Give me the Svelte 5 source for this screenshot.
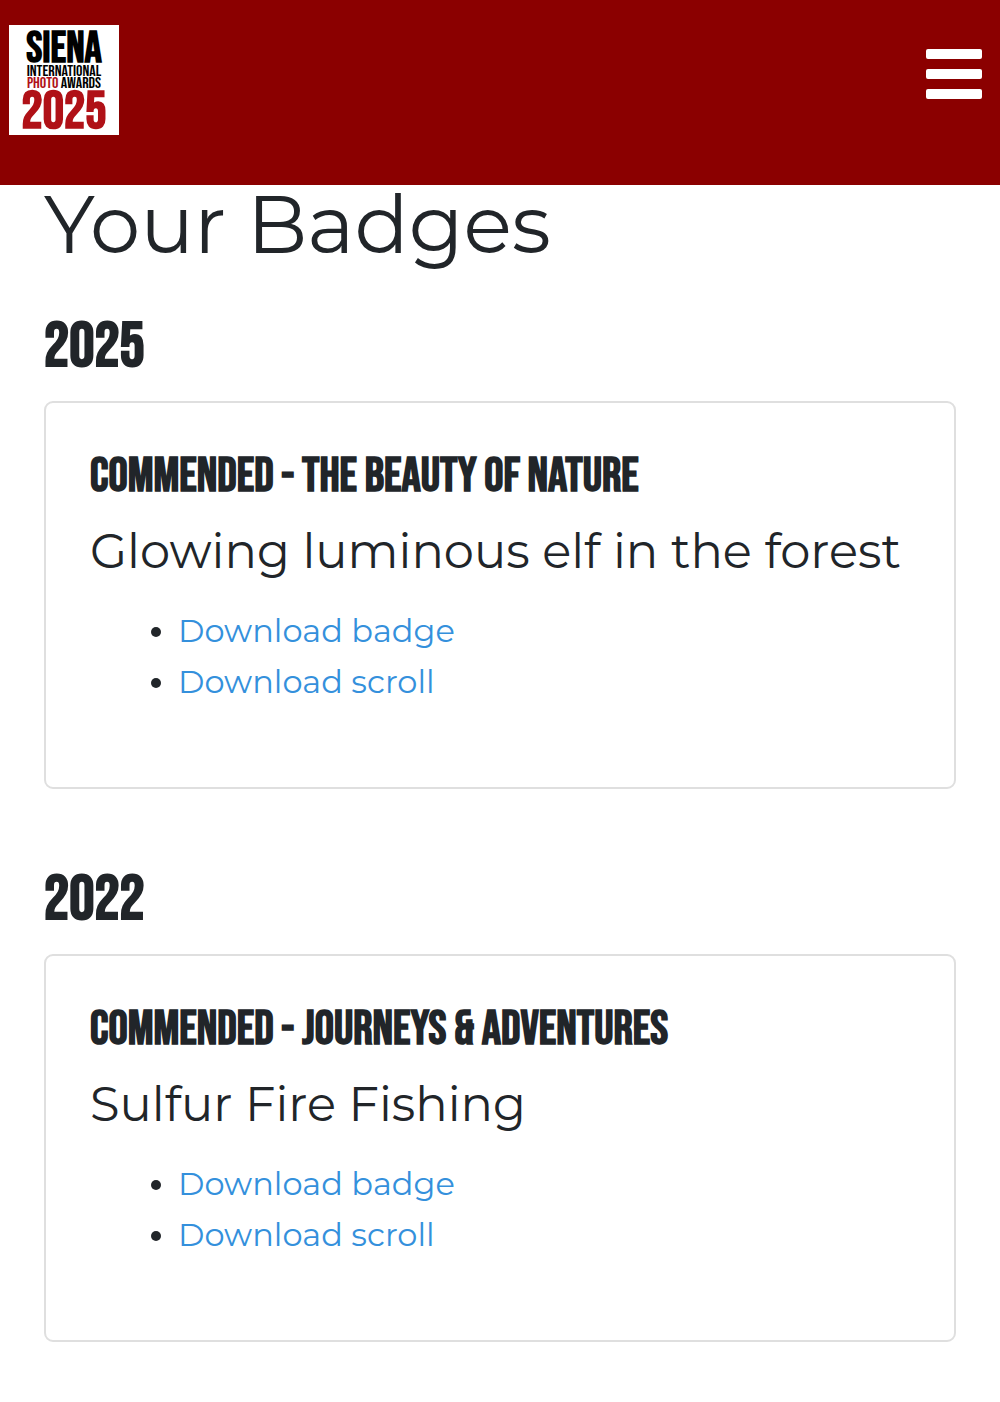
<script>
  const years = [
    { year: 2025, award: "Commended - The Beauty of Nature", title: "Glowing luminous elf in the forest" },
    { year: 2022, award: "Commended - Journeys & Adventures", title: "Sulfur Fire Fishing" },
  ];
</script>

<header>
  <a class="logo" href="#home" aria-label="Siena International Photo Awards 2025">
    <svg viewBox="0 0 110 110">
      <rect width="110" height="110" fill="#fff" />
      <g text-anchor="middle">
        <text class="siena" x="55" y="37">SIENA</text>
        <text class="small" x="55" y="51">INTERNATIONAL</text>
        <text class="small" x="55" y="63"><tspan class="red">PHOTO</tspan> AWARDS</text>
        <text class="year red" x="55" y="103">2025</text>
      </g>
    </svg>
  </a>
  <button class="menu" type="button" aria-label="Menu">
    <svg viewBox="0 0 56 50" fill="#fff">
      <rect width="56" height="10" rx="2" />
      <rect y="20" width="56" height="10" rx="2" />
      <rect y="40" width="56" height="10" rx="2" />
    </svg>
  </button>
</header>

<main>
  <h1>Your Badges</h1>
  {#each years as { year, award, title }}
    <section>
      <h2>{year}</h2>
      <div class="card">
        <h3>{award}</h3>
        <h4>{title}</h4>
        <ul>
          <li><a href="#badge-{year}">Download badge</a></li>
          <li><a href="#scroll-{year}">Download scroll</a></li>
        </ul>
      </div>
    </section>
  {/each}
</main>

<style>
  :global(body) {
    margin: 0;
    background: #fff;
    color: #212529;
    font-family: Montserrat, Inter, sans-serif;
  }

  header {
    display: flex;
    justify-content: space-between;
    align-items: flex-start;
    box-sizing: border-box;
    height: 185px;
    padding: 25px 18px 0 9px;
    background: #8b0000;
  }

  .logo {
    display: block;
    width: 110px;
    height: 110px;
  }

  .logo text {
    font-family: "Bebas Neue", "Liberation Sans Narrow", sans-serif;
  }

  .siena {
    font-size: 43px;
    font-weight: 700;
  }

  .small {
    font-size: 16px;
  }

  .year {
    font-size: 53px;
    font-weight: 700;
  }

  .red {
    fill: #b01117;
  }

  .menu {
    margin-top: 24px;
    padding: 0;
    border: none;
    background: none;
    cursor: pointer;
  }

  .menu svg {
    display: block;
    width: 56px;
    height: 50px;
  }

  main {
    padding: 0 44px 60px;
  }

  h1,
  h2,
  h3,
  h4 {
    margin: 0;
    font-weight: 400;
  }

  h1 {
    margin-bottom: 42px;
    font-size: 80px;
    line-height: 80px;
  }

  h2,
  h3 {
    font-family: "Bebas Neue", "Liberation Sans Narrow", sans-serif;
    font-weight: 700;
    text-transform: uppercase;
  }

  h2 {
    margin-bottom: 14px;
    font-size: 63px;
    line-height: 80px;
  }

  section + section {
    margin-top: 71px;
  }

  .card {
    padding: 44px;
    border: 2px solid #dfdfdf;
    border-radius: 9px;
  }

  h3 {
    margin-bottom: 16px;
    font-size: 48px;
    line-height: 60px;
  }

  h4 {
    font-size: 48px;
    line-height: 56px;
  }

  ul {
    margin: 26px 0 36px;
    padding-left: 88px;
    font-size: 32px;
    line-height: 51px;
  }

  li a {
    color: #3490dc;
    text-decoration: none;
  }
</style>
